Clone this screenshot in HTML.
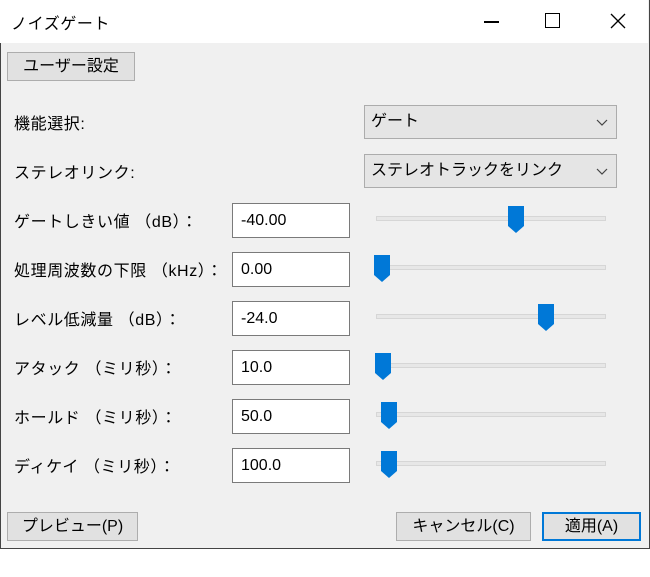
<!DOCTYPE html>
<html><head><meta charset="utf-8"><style>
*{box-sizing:border-box;margin:0;padding:0}
body{width:650px;height:577px;background:#fff;position:relative;overflow:hidden;font-family:"Liberation Sans","Noto Sans CJK JP",sans-serif;font-size:16px;color:#000}
.win{position:absolute;left:0;top:0;width:650px;height:549px;border:1px solid #444;border-top:none;background:#f0f0f0}
.in{position:absolute;left:-1px;top:0}
.title{position:absolute;left:0;top:0;width:648px;height:43px;background:#fff}
.t{position:absolute;white-space:nowrap;letter-spacing:0.6px}
.btn{position:absolute;background:#e1e1e1;border:1px solid #adadad;text-align:center;line-height:28px}
.sel{position:absolute;left:364px;width:253px;height:34px;background:#e5e5e5;border:1px solid #acacac;padding-left:6px;line-height:32px}
.sel svg{position:absolute;right:8px;top:13px}
.tb{position:absolute;left:232px;width:118px;height:35px;background:#fff;border:1px solid #7a7a7a;padding-left:8px;line-height:33px}
.track{position:absolute;left:376px;width:230px;height:5px;background:#e7e7e7;border:1px solid #d6d6d6}
.th{position:absolute;width:16px;height:27px}
</style></head><body>
<div class="win"><div class="in">
<div class="title">
<div class="t" style="left:11px;top:10px">ノイズゲート</div>
<div style="position:absolute;left:484px;top:21px;width:15px;height:1.5px;background:#000"></div>
<div style="position:absolute;left:545px;top:13px;width:15px;height:15px;border:1.3px solid #000"></div>
<svg style="position:absolute;left:610px;top:13px" width="16" height="16"><path d="M1 1L15 15M15 1L1 15" stroke="#000" stroke-width="1.3"/></svg>
</div>
<div class="btn" style="left:7px;top:52px;width:128px;height:29px">ユーザー設定</div>
<div class="t" style="left:14px;top:110px">機能選択:</div>
<div class="sel" style="top:105px">ゲート<svg width="12" height="8"><path d="M1 1L6 6L11 1" stroke="#444" fill="none" stroke-width="1.2"/></svg></div>
<div class="t" style="left:14px;top:159px">ステレオリンク:</div>
<div class="sel" style="top:154px">ステレオトラックをリンク<svg width="12" height="8"><path d="M1 1L6 6L11 1" stroke="#444" fill="none" stroke-width="1.2"/></svg></div>

<div class="t" style="left:14px;top:208px">ゲートしきい値 （dB）：</div>
<div class="tb" style="top:203px">-40.00</div>
<div class="track" style="top:216px"></div>
<svg class="th" style="left:508px;top:206px" viewBox="0 0 16 27"><path d="M0 0H16V20L8 27L0 20Z" fill="#0078d7"/></svg>

<div class="t" style="left:14px;top:257px">処理周波数の下限 （kHz）：</div>
<div class="tb" style="top:252px">0.00</div>
<div class="track" style="top:265px"></div>
<svg class="th" style="left:374px;top:255px" viewBox="0 0 16 27"><path d="M0 0H16V20L8 27L0 20Z" fill="#0078d7"/></svg>

<div class="t" style="left:14px;top:306px">レベル低減量 （dB）：</div>
<div class="tb" style="top:301px">-24.0</div>
<div class="track" style="top:314px"></div>
<svg class="th" style="left:538px;top:304px" viewBox="0 0 16 27"><path d="M0 0H16V20L8 27L0 20Z" fill="#0078d7"/></svg>

<div class="t" style="left:14px;top:355px">アタック （ミリ秒）：</div>
<div class="tb" style="top:350px">10.0</div>
<div class="track" style="top:363px"></div>
<svg class="th" style="left:375px;top:353px" viewBox="0 0 16 27"><path d="M0 0H16V20L8 27L0 20Z" fill="#0078d7"/></svg>

<div class="t" style="left:14px;top:404px">ホールド （ミリ秒）：</div>
<div class="tb" style="top:399px">50.0</div>
<div class="track" style="top:412px"></div>
<svg class="th" style="left:381px;top:402px" viewBox="0 0 16 27"><path d="M0 0H16V20L8 27L0 20Z" fill="#0078d7"/></svg>

<div class="t" style="left:14px;top:453px">ディケイ （ミリ秒）：</div>
<div class="tb" style="top:448px">100.0</div>
<div class="track" style="top:461px"></div>
<svg class="th" style="left:381px;top:451px" viewBox="0 0 16 27"><path d="M0 0H16V20L8 27L0 20Z" fill="#0078d7"/></svg>

<div class="btn" style="left:7px;top:512px;width:131px;height:29px">プレビュー(P)</div>
<div class="btn" style="left:396px;top:512px;width:135px;height:29px">キャンセル(C)</div>
<div class="btn" style="left:542px;top:512px;width:99px;height:29px;border:2px solid #0078d7;line-height:26px">適用(A)</div>
</div></div>
</body></html>
